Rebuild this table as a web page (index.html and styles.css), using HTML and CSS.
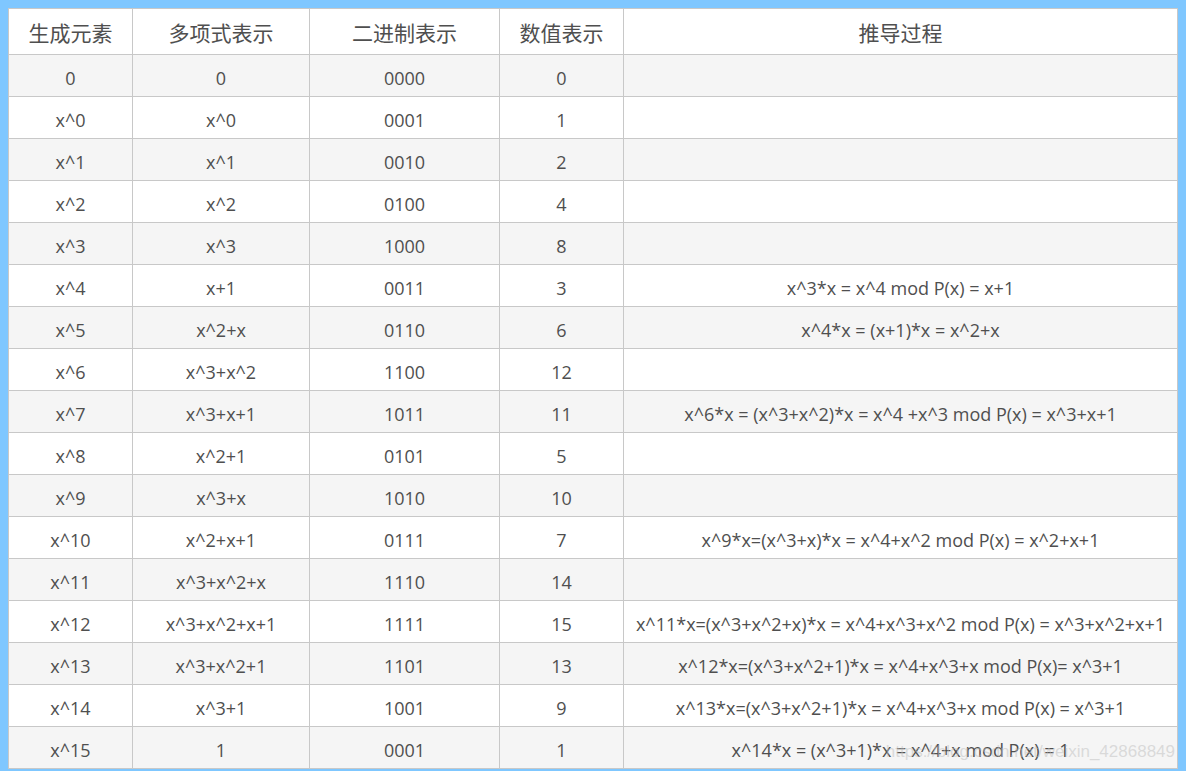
FILE: index.html
```html
<!DOCTYPE html>
<html lang="zh">
<head>
<meta charset="utf-8">
<link rel="stylesheet" href="styles.css">
</head>
<body>
<table class="gf">
<colgroup>
<col class="c1"><col class="c2"><col class="c3"><col class="c4"><col class="c5">
</colgroup>
<thead>
<tr><th>生成元素</th><th>多项式表示</th><th>二进制表示</th><th>数值表示</th><th>推导过程</th></tr>
</thead>
<tbody>
<tr><td>0</td><td>0</td><td>0000</td><td>0</td><td></td></tr>
<tr><td>x^0</td><td>x^0</td><td>0001</td><td>1</td><td></td></tr>
<tr><td>x^1</td><td>x^1</td><td>0010</td><td>2</td><td></td></tr>
<tr><td>x^2</td><td>x^2</td><td>0100</td><td>4</td><td></td></tr>
<tr><td>x^3</td><td>x^3</td><td>1000</td><td>8</td><td></td></tr>
<tr><td>x^4</td><td>x+1</td><td>0011</td><td>3</td><td>x^3*x = x^4 mod P(x) = x+1</td></tr>
<tr><td>x^5</td><td>x^2+x</td><td>0110</td><td>6</td><td>x^4*x = (x+1)*x = x^2+x</td></tr>
<tr><td>x^6</td><td>x^3+x^2</td><td>1100</td><td>12</td><td></td></tr>
<tr><td>x^7</td><td>x^3+x+1</td><td>1011</td><td>11</td><td>x^6*x = (x^3+x^2)*x = x^4 +x^3 mod P(x) = x^3+x+1</td></tr>
<tr><td>x^8</td><td>x^2+1</td><td>0101</td><td>5</td><td></td></tr>
<tr><td>x^9</td><td>x^3+x</td><td>1010</td><td>10</td><td></td></tr>
<tr><td>x^10</td><td>x^2+x+1</td><td>0111</td><td>7</td><td>x^9*x=(x^3+x)*x = x^4+x^2 mod P(x) = x^2+x+1</td></tr>
<tr><td>x^11</td><td>x^3+x^2+x</td><td>1110</td><td>14</td><td></td></tr>
<tr><td>x^12</td><td>x^3+x^2+x+1</td><td>1111</td><td>15</td><td>x^11*x=(x^3+x^2+x)*x = x^4+x^3+x^2 mod P(x) = x^3+x^2+x+1</td></tr>
<tr><td>x^13</td><td>x^3+x^2+1</td><td>1101</td><td>13</td><td>x^12*x=(x^3+x^2+1)*x = x^4+x^3+x mod P(x)= x^3+1</td></tr>
<tr><td>x^14</td><td>x^3+1</td><td>1001</td><td>9</td><td>x^13*x=(x^3+x^2+1)*x = x^4+x^3+x mod P(x) = x^3+1</td></tr>
<tr><td>x^15</td><td>1</td><td>0001</td><td>1</td><td class="last">x^14*x = (x^3+1)*x = x^4+x mod P(x) = 1<span class="wm">https://blog.csdn.net/weixin_42868849</span></td></tr>
</tbody>
</table>
</body>
</html>
```
FILE: styles.css
```css
html, body {
  margin: 0;
  padding: 0;
  background: #7fc7ff;
  overflow: hidden;
}
body {
  padding: 8px 8px 0 8px;
  font-family: "Open Sans", "Noto Sans CJK SC", sans-serif;
  color: #4f4f4f;
}
.gf {
  border-collapse: collapse;
  table-layout: fixed;
  width: 1170px;
  background: #fff;
}
.c1 { width: 124px; }
.c2 { width: 177px; }
.c3 { width: 190px; }
.c4 { width: 124px; }
.c5 { width: 554px; }
.gf th, .gf td {
  border: 1px solid #c8c8c8;
  text-align: center;
  padding: 0;
  white-space: nowrap;
}
.gf th {
  height: 45px;
  font-weight: normal;
  font-size: 21px;
  color: #4f4f4f;
  font-family: "Noto Sans CJK SC", sans-serif;
  padding-top: 0;
}
.gf td {
  height: 37px;
  padding-top: 4px;
  font-size: 18px;
  line-height: 24px;
}
.gf tbody tr:nth-child(odd) td { background: #f5f5f5; }
.gf td.last { position: relative; }
.wm {
  position: absolute;
  right: 2px;
  top: 13px;
  color: rgba(190, 190, 190, 0.5);
  font-size: 17px;
  font-family: "Liberation Sans", sans-serif;
}
```
